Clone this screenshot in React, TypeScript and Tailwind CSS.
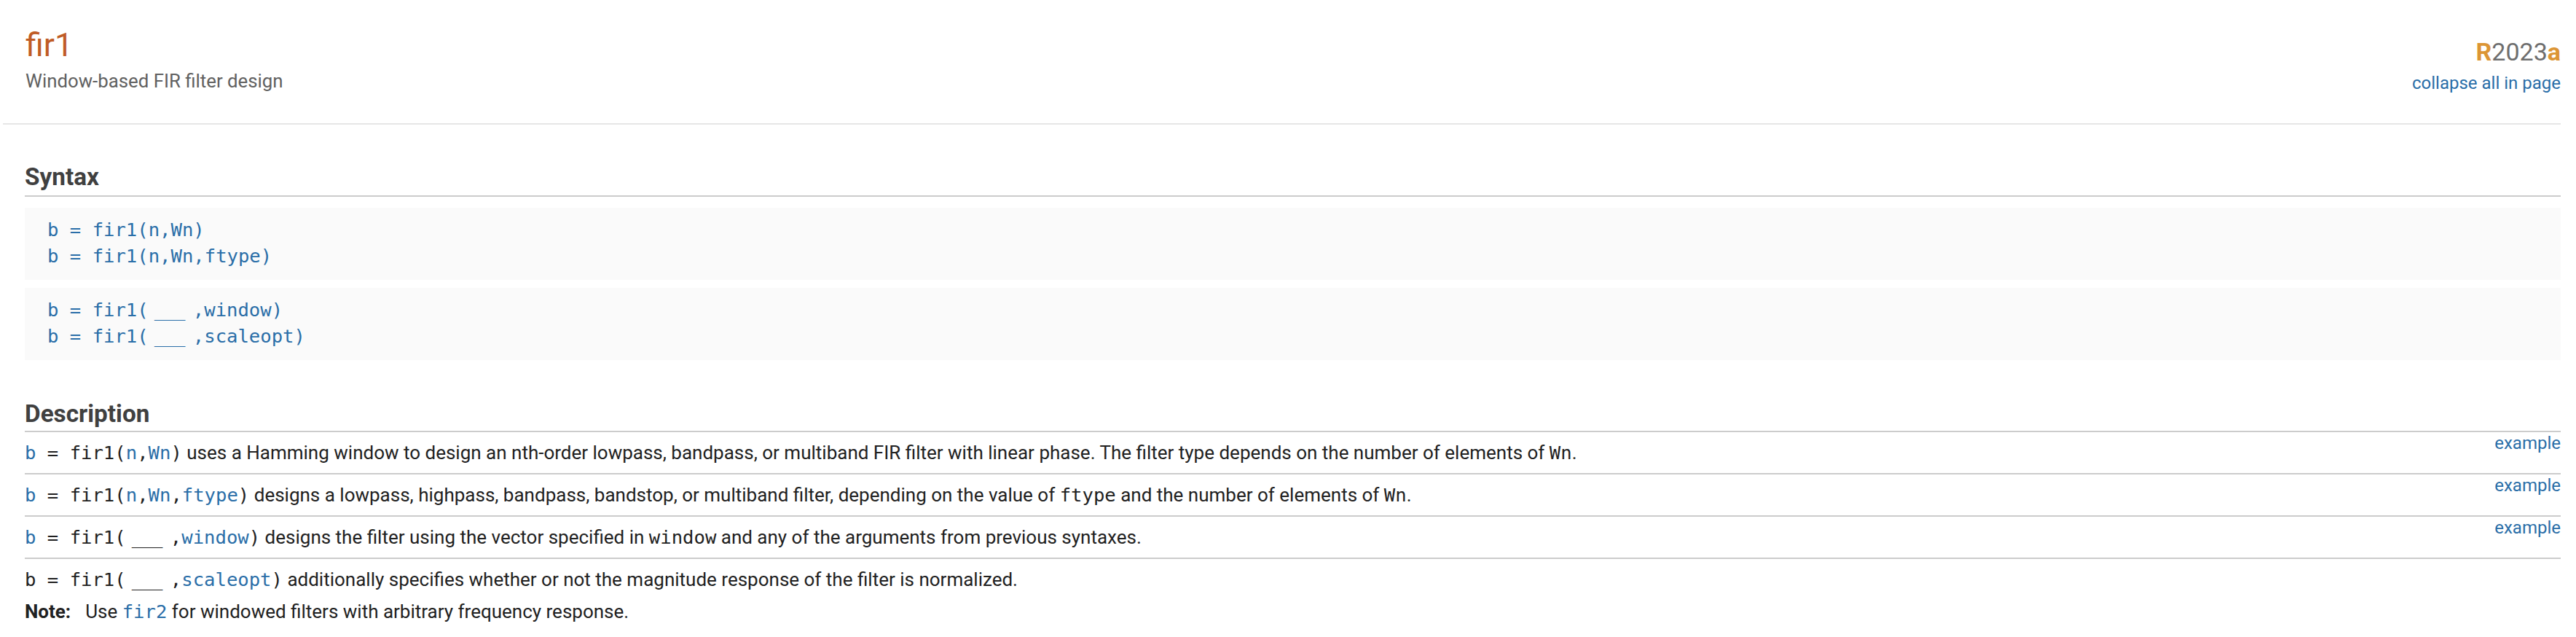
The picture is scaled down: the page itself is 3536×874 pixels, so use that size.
const mono = "font-['DejaVu_Sans_Mono',monospace] text-[25.6px]";
const link = "text-[#2a6ea8]";

/** Placeholder for "any of the previous input arguments". */
function Blank() {
  return <span className="ml-[8px] mr-[12px] tracking-[-1.7px]">___</span>;
}

function SyntaxBlock({ lines }: { lines: React.ReactNode[] }) {
  return (
    <div className={`bg-[#fafafa] pl-[31px] pt-[12px] pb-[15px] leading-[36px] ${mono} ${link}`}>
      {lines.map((line, i) => (
        <div key={i} className="whitespace-pre">
          {line}
        </div>
      ))}
    </div>
  );
}

function Code({ children, blue = false }: { children: React.ReactNode; blue?: boolean }) {
  return <span className={`${mono} whitespace-pre ${blue ? link : "text-[#212121]"}`}>{children}</span>;
}

const rows: { call: React.ReactNode; text: React.ReactNode; example: boolean }[] = [
  {
    call: (
      <>
        <Code blue>b</Code>
        <Code> = fir1(</Code>
        <Code blue>n</Code>
        <Code>,</Code>
        <Code blue>Wn</Code>
        <Code>)</Code>
      </>
    ),
    text: (
      <>
        {" "}uses a Hamming window to design an nth-order lowpass, bandpass, or multiband FIR filter with linear
        phase. The filter type depends on the number of elements of <Code>Wn</Code>.
      </>
    ),
    example: true,
  },
  {
    call: (
      <>
        <Code blue>b</Code>
        <Code> = fir1(</Code>
        <Code blue>n</Code>
        <Code>,</Code>
        <Code blue>Wn</Code>
        <Code>,</Code>
        <Code blue>ftype</Code>
        <Code>)</Code>
      </>
    ),
    text: (
      <>
        {" "}designs a lowpass, highpass, bandpass, bandstop, or multiband filter, depending on the value of{" "}
        <Code>ftype</Code> and the number of elements of <Code>Wn</Code>.
      </>
    ),
    example: true,
  },
  {
    call: (
      <>
        <Code blue>b</Code>
        <Code> = fir1(</Code>
        <Code>
          <Blank />
        </Code>
        <Code>,</Code>
        <Code blue>window</Code>
        <Code>)</Code>
      </>
    ),
    text: (
      <>
        {" "}designs the filter using the vector specified in <Code>window</Code> and any of the arguments from
        previous syntaxes.
      </>
    ),
    example: true,
  },
  {
    call: (
      <>
        <Code>b = fir1(</Code>
        <Code>
          <Blank />
        </Code>
        <Code>,</Code>
        <Code blue>scaleopt</Code>
        <Code>)</Code>
      </>
    ),
    text: <> additionally specifies whether or not the magnitude response of the filter is normalized.</>,
    example: false,
  },
];

export default function App() {
  return (
    <div className="min-h-screen bg-white pl-[4px] pr-[21px] font-['Roboto',sans-serif] text-[#212121]">
      <header className="flex justify-between border-b-2 border-[#e6e6e6] pl-[31px] pt-[35px] pb-[37px]">
        <div>
          <h1 className="text-[44.8px] leading-[54px] text-[#c05c26]">fir1</h1>
          <p className="mt-[4px] text-[25.8px] leading-[36px] text-[#616161]">Window-based FIR filter design</p>
        </div>
        <div className="flex flex-col items-end">
          <div className="mt-[16px] text-[34px] leading-[40px] text-[#6e6e6e]">
            <span className="font-bold text-[#dc9535]">R</span>
            <span>2023</span>
            <span className="font-bold text-[#dc9535]">a</span>
          </div>
          <a className={`mt-[5px] text-[24px] leading-[36px] ${link}`}>collapse all in page</a>
        </div>
      </header>

      <main className="pl-[30px]">
        <section>
          <h2 className="mt-[53px] border-b-2 border-[#cccccc] pb-[6px] text-[33.3px] font-bold leading-[38px] text-[#404040]">
            Syntax
          </h2>
          <div className="mt-[15px]">
            <SyntaxBlock lines={["b = fir1(n,Wn)", "b = fir1(n,Wn,ftype)"]} />
          </div>
          <div className="mt-[11px]">
            <SyntaxBlock
              lines={[
                <>
                  b = fir1(
                  <Blank />
                  ,window)
                </>,
                <>
                  b = fir1(
                  <Blank />
                  ,scaleopt)
                </>,
              ]}
            />
          </div>
        </section>

        <section>
          <h2 className="mt-[55px] border-b-2 border-[#cccccc] pb-[4px] text-[33.3px] font-bold leading-[38px] text-[#404040]">
            Description
          </h2>
          {rows.map((row, i) => (
            <div
              key={i}
              className={`flex items-start justify-between gap-6 pt-[3px] text-[26px] ${
                i < rows.length - 1 ? "border-b-2 border-[#cccccc] pb-[10px]" : "pb-[8px]"
              }`}
            >
              <p className="pt-[7px] leading-[36px]">
                {row.call}
                {row.text}
              </p>
              {row.example ? <a className={`shrink-0 text-[24px] leading-[24px] ${link}`}>example</a> : null}
            </div>
          ))}
          <p className="text-[26px] leading-[36px]">
            <strong className="mr-[20px]">Note:</strong>Use <Code blue>fir2</Code> for windowed filters with arbitrary
            frequency response.
          </p>
        </section>
      </main>
    </div>
  );
}
